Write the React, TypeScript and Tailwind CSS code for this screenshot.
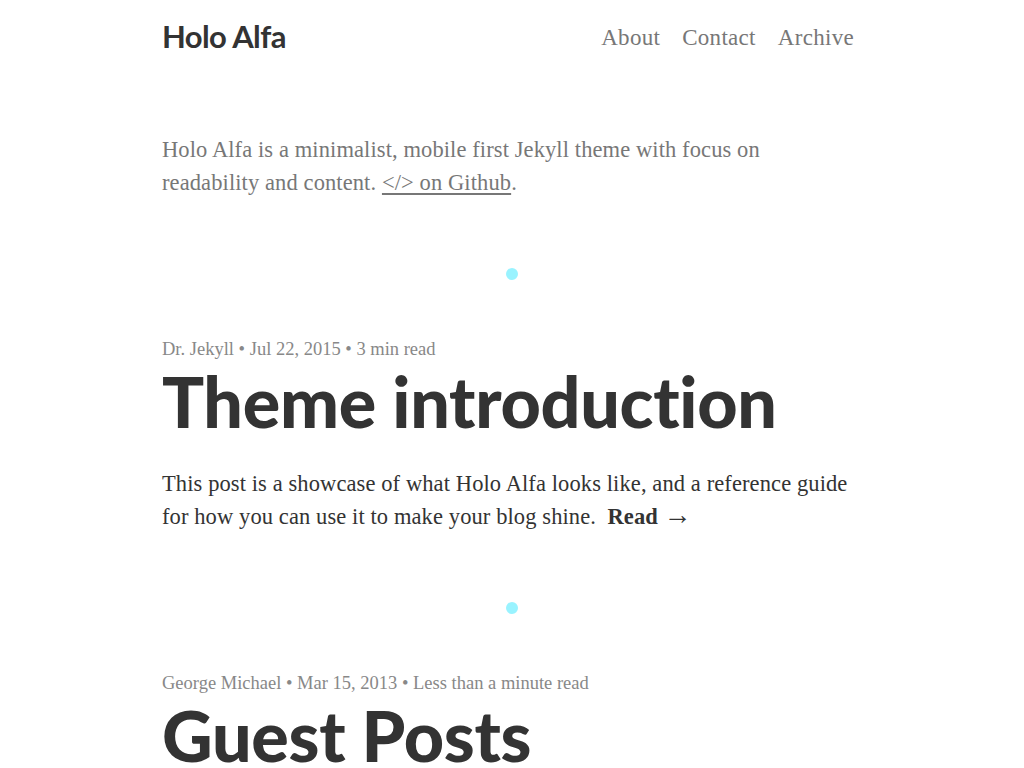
const serif = "font-['Liberation_Serif','Times_New_Roman',serif]";
const sans = "font-['Lato','Open_Sans',sans-serif]";

const posts = [
  {
    author: 'Dr. Jekyll',
    date: 'Jul 22, 2015',
    read: '3 min read',
    title: 'Theme introduction',
    excerpt:
      'This post is a showcase of what Holo Alfa looks like, and a reference guide for how you can use it to make your blog shine.',
  },
  {
    author: 'George Michael',
    date: 'Mar 15, 2013',
    read: 'Less than a minute read',
    title: 'Guest Posts',
    excerpt: '',
  },
];

function Dot() {
  return (
    <div className="flex justify-center">
      <span className="block w-3 h-3 rounded-full bg-[#99f3ff]" />
    </div>
  );
}

export default function App() {
  return (
    <div className="min-h-screen bg-white overflow-hidden">
      <div className="mx-auto w-[700px]">
        {/* Header */}
        <header className="flex items-center justify-between h-[72px]">
          <a href="#" className={`${sans} text-[31px] font-bold text-[#333] tracking-[-0.6px]`}>
            Holo Alfa
          </a>
          <nav className={`${serif} flex gap-[22px] pt-[4px] text-[23px] tracking-[0.3px] text-[#777] pr-[8px]`}>
            <a href="#">About</a>
            <a href="#">Contact</a>
            <a href="#">Archive</a>
          </nav>
        </header>

        {/* Intro */}
        <p className={`${serif} max-w-[694px] mt-[61px] text-[22.5px] tracking-[0.1px] leading-[33px] text-[#777]`}>
          Holo Alfa is a minimalist, mobile first Jekyll theme with focus on readability and content.{' '}
          <a href="#" className="underline underline-offset-[3px]">&lt;/&gt; on Github</a>.
        </p>

        <div className="mt-[69px]">
          <Dot />
        </div>

        {/* Posts */}
        {posts.map((post, i) => (
          <article key={post.title} className="mt-[57px]">
            <p className={`${serif} text-[18.5px] leading-[24px] text-[#888]`}>
              {post.author} • {post.date} • {post.read}
            </p>
            <h2 className={`${sans} mt-[4px] text-[70px] leading-[72px] font-black text-[#333] tracking-[-0.3px]`}>
              {post.title}
            </h2>
            {post.excerpt && (
              <p className={`${serif} max-w-[694px] mt-[30px] text-[22.5px] tracking-[0.1px] leading-[33px] text-[#333]`}>
                {post.excerpt}
                {'\u00a0 '}
                <a href="#" className="font-bold">
                  Read <span className="font-normal text-[28px] leading-[20px]">→</span>
                </a>
              </p>
            )}
            {i === 0 && (
              <div className="mt-[69px]">
                <Dot />
              </div>
            )}
          </article>
        ))}
      </div>
    </div>
  );
}
